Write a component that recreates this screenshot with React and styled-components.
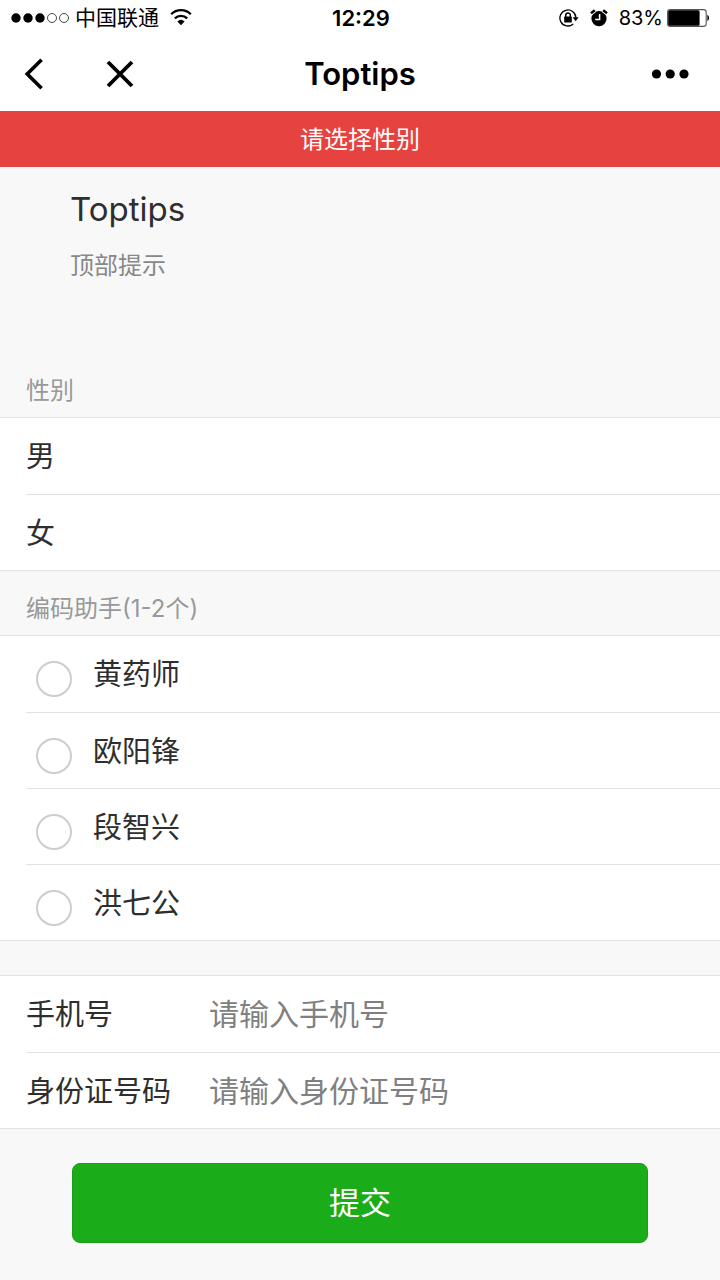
import React, { useState } from "react";
import styled, { createGlobalStyle } from "styled-components";

const helpers = ["黄药师", "欧阳锋", "段智兴", "洪七公"];

const fields = [
  { id: "phone", label: "手机号", placeholder: "请输入手机号", type: "tel" },
  { id: "idcard", label: "身份证号码", placeholder: "请输入身份证号码", type: "text" },
];

const SignalIcon = () => (
  <svg width="60" height="12" viewBox="0 0 60 12">
    {[5, 17, 29].map((x) => (
      <circle key={x} cx={x} cy="6" r="4.7" fill="#000" />
    ))}
    {[41, 53].map((x) => (
      <circle key={x} cx={x} cy="6" r="4.5" fill="none" stroke="#333" strokeWidth="0.9" />
    ))}
  </svg>
);

const WifiIcon = () => (
  <svg width="22" height="18" viewBox="0 0 22 18">
    <g fill="none" stroke="#000" strokeWidth="2.3">
      <path d="M1.2 5.2a14 14 0 0 1 19.6 0" />
      <path d="M4.8 9.4a9 9 0 0 1 12.4 0" />
    </g>
    <path d="M7.4 12.4a5.4 5.4 0 0 1 7.2 0L11 16.2z" />
  </svg>
);

const LockRotationIcon = () => (
  <svg width="20" height="18" viewBox="0 0 20 18">
    <path
      d="M14.2 15A8 8 0 1 1 16.9 8.6"
      fill="none"
      stroke="#000"
      strokeWidth="1.3"
    />
    <path d="M13.6 8.2h6l-3 4z" />
    <rect x="5.2" y="7.6" width="7.6" height="6" rx="0.6" />
    <path d="M6.7 8V6.2a2.3 2.3 0 0 1 4.6 0V8" fill="none" stroke="#000" strokeWidth="1.5" />
  </svg>
);

const AlarmIcon = () => (
  <svg width="18" height="18" viewBox="0 0 18 18">
    <circle cx="9" cy="9.6" r="7.6" />
    <path d="M1 4.6l4-3.4M17 4.6l-4-3.4" stroke="#fff" strokeWidth="4" />
    <path d="M1 4.2l3.8-3M17 4.2l-3.8-3" stroke="#000" strokeWidth="2.4" />
    <path d="M9.6 5v5.4H5.2" fill="none" stroke="#fff" strokeWidth="1.5" />
  </svg>
);

const BatteryIcon = () => (
  <svg width="44" height="18" viewBox="0 0 44 18">
    <rect x="0.6" y="0.6" width="38.6" height="16.8" rx="2.6" fill="none" stroke="#555" strokeWidth="1.1" />
    <rect x="1.2" y="1.2" width="31.4" height="15.6" rx="1.6" />
    <path d="M40.4 5.8a3.8 3.8 0 0 1 0 6.4z" />
  </svg>
);

export default function App() {
  const [checked, setChecked] = useState([]);

  const toggle = (name) => {
    setChecked((prev) =>
      prev.includes(name) ? prev.filter((n) => n !== name) : [...prev, name]
    );
  };

  return (
    <Page>
      <GlobalStyle />
      <StatusBar>
        <StatusSide>
          <SignalIcon />
          <Carrier>中国联通</Carrier>
          <WifiIcon />
        </StatusSide>
        <Clock>12:29</Clock>
        <StatusSide $end>
          <LockRotationIcon />
          <AlarmIcon />
          <Battery>
            83%
            <BatteryIcon />
          </Battery>
        </StatusSide>
      </StatusBar>
      <NavBar>
        <NavSide>
          <NavButton aria-label="返回">
            <svg width="20" height="34" viewBox="0 0 20 34">
              <path d="M17.6 2.8L3.2 17l14.4 14.2" fill="none" stroke="#000" strokeWidth="3.6" />
            </svg>
          </NavButton>
          <NavButton aria-label="关闭">
            <svg width="28" height="28" viewBox="0 0 28 28">
              <path d="M2 2l24 24M26 2L2 26" fill="none" stroke="#000" strokeWidth="3.8" />
            </svg>
          </NavButton>
        </NavSide>
        <NavTitle>Toptips</NavTitle>
        <NavSide $end>
          <NavButton aria-label="更多">
            <svg width="46" height="12" viewBox="0 0 46 12">
              <circle cx="6.5" cy="6" r="4.6" />
              <circle cx="20.2" cy="6" r="4.6" />
              <circle cx="34" cy="6" r="4.6" />
            </svg>
          </NavButton>
        </NavSide>
      </NavBar>
      <TopTips role="alert">请选择性别</TopTips>
      <Header>
        <Title>Toptips</Title>
        <Desc>顶部提示</Desc>
      </Header>
      <form onSubmit={(e) => e.preventDefault()}>
        <CellsTitle>性别</CellsTitle>
        <Cells>
          <Cell>男</Cell>
          <Cell>女</Cell>
        </Cells>
        <CellsTitle>编码助手(1-2个)</CellsTitle>
        <Cells>
          {helpers.map((name) => (
            <Cell as="label" key={name}>
              <Check
                type="checkbox"
                checked={checked.includes(name)}
                onChange={() => toggle(name)}
              />
              {name}
            </Cell>
          ))}
        </Cells>
        <Cells $spaced>
          {fields.map((field) => (
            <Cell key={field.id}>
              <Label htmlFor={field.id}>{field.label}</Label>
              <Input id={field.id} type={field.type} placeholder={field.placeholder} />
            </Cell>
          ))}
        </Cells>
        <Submit type="submit">提交</Submit>
      </form>
    </Page>
  );
}

const GlobalStyle = createGlobalStyle`
  * {
    box-sizing: border-box;
  }
  body {
    margin: 0;
    background: #f8f8f8;
    color: #2e2e2e;
    font-family: Inter, "Noto Sans CJK SC", sans-serif;
  }
  svg {
    display: block;
    flex: none;
  }
`;

const Page = styled.div`
  min-height: 100vh;
  background: #f8f8f8;
`;

const StatusBar = styled.div`
  display: grid;
  grid-template-columns: 1fr auto 1fr;
  align-items: center;
  height: 36px;
  padding: 0 9px 0 11px;
  background: #fff;
  color: #000;
`;

const StatusSide = styled.div`
  display: flex;
  align-items: center;
  justify-content: ${(props) => (props.$end ? "flex-end" : "flex-start")};
  gap: ${(props) => (props.$end ? "11px" : "0")};
`;

const Carrier = styled.span`
  margin: 0 11px 0 4px;
  font-size: 21px;
  line-height: 36px;
`;

const Clock = styled.span`
  font-size: 22px;
  font-weight: 600;
  line-height: 36px;
`;

const Battery = styled.div`
  display: flex;
  align-items: center;
  gap: 4px;
  font-size: 20px;
  line-height: 36px;
`;

const NavBar = styled.header`
  display: grid;
  grid-template-columns: 1fr auto 1fr;
  align-items: center;
  height: 75px;
  padding: 0 24px;
  background: #fff;
`;

const NavSide = styled.div`
  display: flex;
  align-items: center;
  justify-content: ${(props) => (props.$end ? "flex-end" : "flex-start")};
  gap: 62px;
`;

const NavButton = styled.button`
  padding: 0;
  border: 0;
  background: none;
  cursor: pointer;
`;

const NavTitle = styled.div`
  color: #000;
  font-size: 31px;
  font-weight: 600;
  line-height: 40px;
`;

const TopTips = styled.div`
  padding: 11px 0 9px;
  background: #e64340;
  color: #fff;
  font-size: 24px;
  line-height: 36px;
  text-align: center;
`;

const Header = styled.div`
  padding: 19px 10% 70px 70px;
`;

const Title = styled.h1`
  margin: 0;
  font-size: 33px;
  font-weight: 400;
  line-height: 46px;
`;

const Desc = styled.p`
  margin: 17px 0 0;
  color: #888;
  font-size: 24px;
  line-height: 34px;
`;

const CellsTitle = styled.div`
  padding: 21px 26px 9px;
  color: #999;
  font-size: 24px;
  line-height: 34px;
`;

const Cells = styled.div`
  margin-top: ${(props) => (props.$spaced ? "34px" : "0")};
  padding-left: 26px;
  border-top: 1px solid #e2e2e2;
  border-bottom: 1px solid #e2e2e2;
  background: #fff;
`;

const Cell = styled.div`
  display: flex;
  align-items: center;
  height: 76px;
  padding-top: 2px;
  font-size: 29px;
  line-height: 42px;
  & + & {
    border-top: 1px solid #e2e2e2;
  }
`;

const Check = styled.input`
  appearance: none;
  flex: none;
  width: 36px;
  height: 36px;
  margin: 8px 21px 0 10px;
  border: 2px solid #cdcdcd;
  border-radius: 50%;
  &:checked {
    border-color: #09bb07;
    background: #09bb07;
  }
`;

const Label = styled.label`
  width: 183px;
  flex: none;
`;

const Input = styled.input`
  flex: 1;
  min-width: 0;
  height: 42px;
  padding: 0 0 2px;
  border: 0;
  outline: 0;
  background: transparent;
  color: inherit;
  font-family: inherit;
  font-size: 30px;
  &::placeholder {
    color: #808080;
  }
`;

const Submit = styled.button`
  display: block;
  width: 80%;
  height: 80px;
  margin: 34px auto;
  padding: 0 0 6px;
  border: 1px solid #1a9c18;
  border-radius: 8px;
  background: #1aad19;
  color: #fff;
  font-family: inherit;
  font-size: 31px;
  cursor: pointer;
`;
